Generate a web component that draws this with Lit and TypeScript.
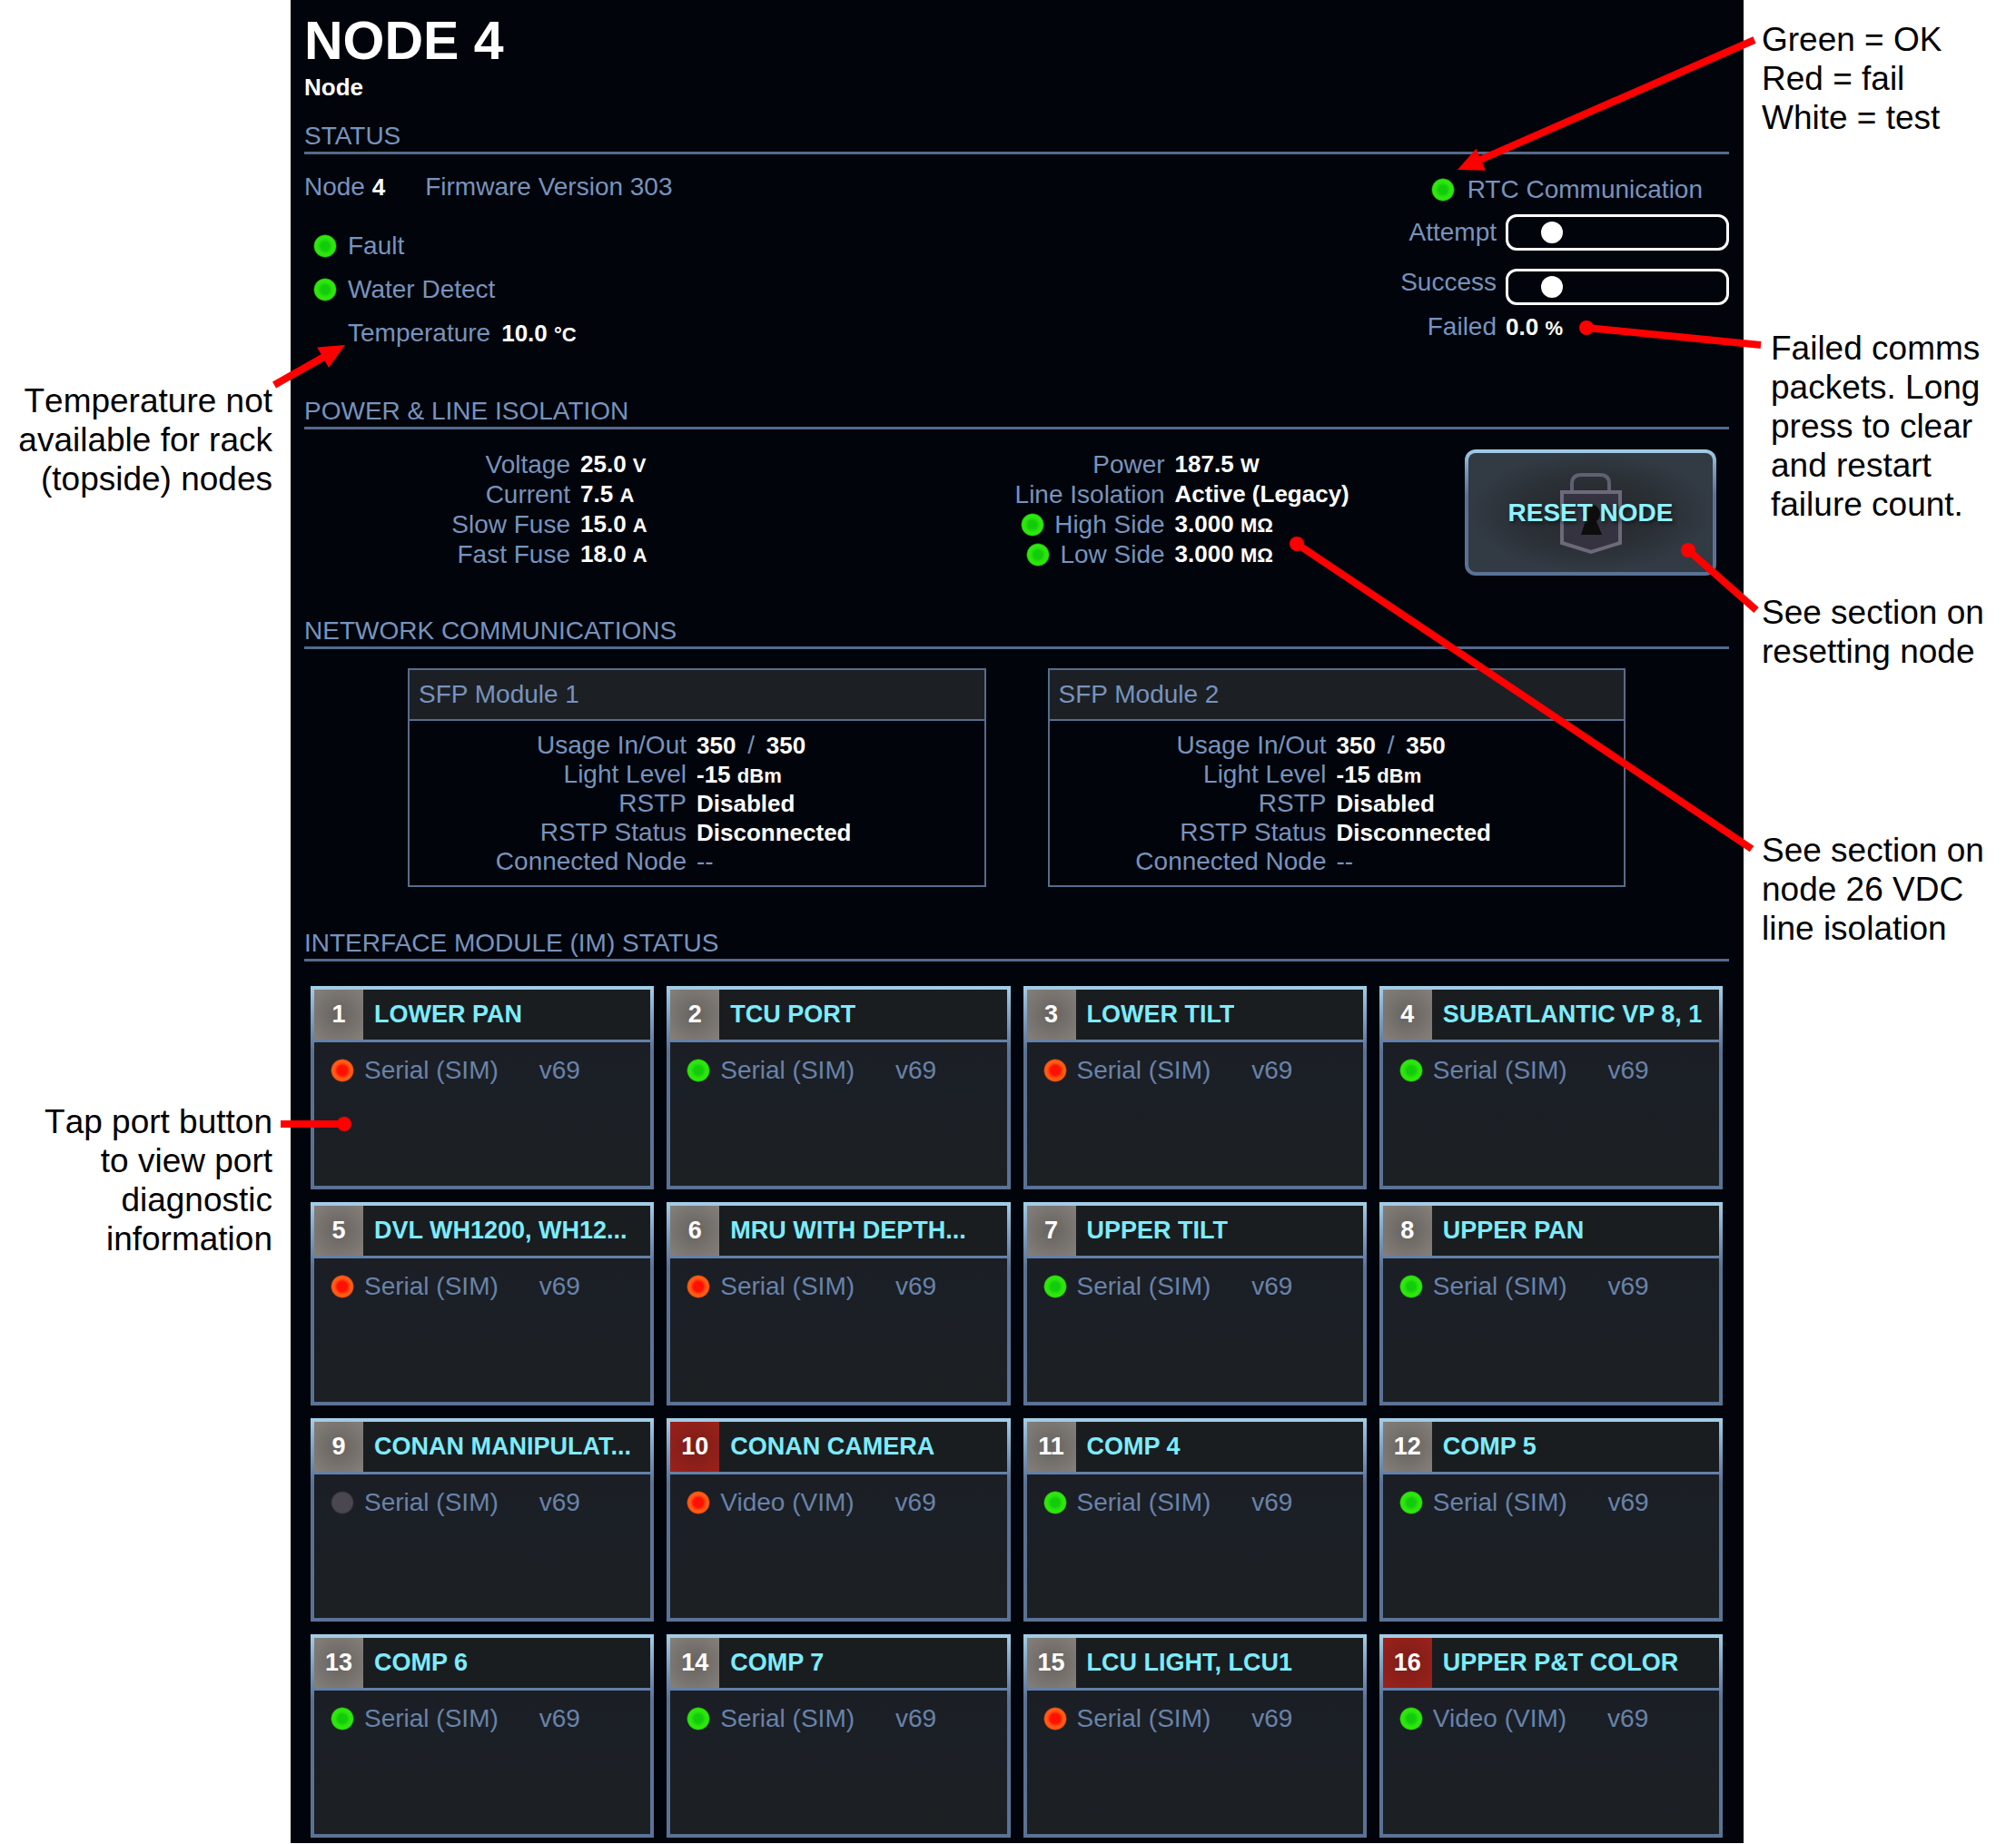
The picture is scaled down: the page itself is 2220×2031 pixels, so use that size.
import { LitElement, html, svg, css } from "lit";
import { customElement, property } from "lit/decorators.js";

type Led = "ok" | "fail" | "off";

interface Reading {
  label: string;
  value: string;
  unit?: string;
  led?: Led;
}

interface Port {
  no: number;
  name: string;
  led: Led;
  kind: string;
  alarm?: boolean;
}

const supply: Reading[] = [
  { label: "Voltage", value: "25.0", unit: "V" },
  { label: "Current", value: "7.5", unit: "A" },
  { label: "Slow Fuse", value: "15.0", unit: "A" },
  { label: "Fast Fuse", value: "18.0", unit: "A" },
];

const isolation: Reading[] = [
  { label: "Power", value: "187.5", unit: "W" },
  { label: "Line Isolation", value: "Active (Legacy)" },
  { label: "High Side", value: "3.000", unit: "MΩ", led: "ok" },
  { label: "Low Side", value: "3.000", unit: "MΩ", led: "ok" },
];

const SERIAL = "Serial (SIM)";
const VIDEO = "Video (VIM)";

const ports: Port[] = [
  { no: 1, name: "LOWER PAN", led: "fail", kind: SERIAL },
  { no: 2, name: "TCU PORT", led: "ok", kind: SERIAL },
  { no: 3, name: "LOWER TILT", led: "fail", kind: SERIAL },
  { no: 4, name: "SUBATLANTIC VP 8, 1", led: "ok", kind: SERIAL },
  { no: 5, name: "DVL WH1200, WH12...", led: "fail", kind: SERIAL },
  { no: 6, name: "MRU WITH DEPTH...", led: "fail", kind: SERIAL },
  { no: 7, name: "UPPER TILT", led: "ok", kind: SERIAL },
  { no: 8, name: "UPPER PAN", led: "ok", kind: SERIAL },
  { no: 9, name: "CONAN MANIPULAT...", led: "off", kind: SERIAL },
  { no: 10, name: "CONAN CAMERA", led: "fail", kind: VIDEO, alarm: true },
  { no: 11, name: "COMP 4", led: "ok", kind: SERIAL },
  { no: 12, name: "COMP 5", led: "ok", kind: SERIAL },
  { no: 13, name: "COMP 6", led: "ok", kind: SERIAL },
  { no: 14, name: "COMP 7", led: "ok", kind: SERIAL },
  { no: 15, name: "LCU LIGHT, LCU1", led: "fail", kind: SERIAL },
  { no: 16, name: "UPPER P&T COLOR", led: "ok", kind: VIDEO, alarm: true },
];

@customElement("status-led")
export class StatusLed extends LitElement {
  @property() state: Led = "ok";

  static styles = css`
    :host {
      display: block;
      flex: none;
      width: 26px;
      height: 26px;
    }
    .lamp {
      width: 100%;
      height: 100%;
      border-radius: 50%;
    }
    .ok {
      background: radial-gradient(closest-side, #12cc0c 0 35%, #2de60c 65% 88%, transparent);
    }
    .fail {
      background: radial-gradient(closest-side, #ff1000 0 40%, #ff5a14 68% 88%, transparent);
    }
    .off {
      background: radial-gradient(closest-side, #4b4751 0 84%, transparent);
    }
  `;

  render() {
    return html`<div class="lamp ${this.state}"></div>`;
  }
}

@customElement("port-card")
export class PortCard extends LitElement {
  @property({ attribute: false }) port!: Port;

  static styles = css`
    :host {
      display: block;
      min-width: 0;
    }
    .card {
      display: flex;
      flex-direction: column;
      width: 100%;
      min-height: 224px;
      box-sizing: border-box;
      margin: 0;
      padding: 0;
      border: 4px solid transparent;
      background:
        linear-gradient(#1b1f23, #1b1f26 50%, #1c2023) padding-box,
        linear-gradient(#a4cfe8, #8fb6d6 8%, #5a7296 32%) border-box;
      font: inherit;
      text-align: left;
      cursor: pointer;
    }
    .head {
      display: flex;
      width: 100%;
      line-height: 55px;
      font-size: 27px;
      font-weight: 700;
      border-bottom: 3px solid #6480a8;
      background: #191d20;
    }
    .no {
      flex: none;
      width: 54px;
      text-align: center;
      color: #fff;
      background: radial-gradient(circle, #66625f, #85807a);
    }
    .no.alarm {
      background: radial-gradient(circle, #7c1d18, #9c211b);
    }
    .name {
      min-width: 0;
      padding-left: 12px;
      overflow: hidden;
      white-space: nowrap;
      color: #7decfc;
    }
    .body {
      display: flex;
      align-items: center;
      padding: 14px 0 0 18px;
      font-size: 28px;
      line-height: 34px;
      color: #6983a9;
    }
    .kind {
      padding: 0 45px 0 11px;
    }
  `;

  render() {
    const p = this.port;
    return html`
      <button class="card" type="button">
        <span class="head">
          <span class="no ${p.alarm ? "alarm" : ""}">${p.no}</span>
          <span class="name">${p.name}</span>
        </span>
        <span class="body">
          <status-led .state=${p.led}></status-led>
          <span class="kind">${p.kind}</span>
          <span>v69</span>
        </span>
      </button>
    `;
  }
}

@customElement("app-root")
export class AppRoot extends LitElement {
  static styles = css`
    :host {
      display: block;
      position: relative;
      font-family: "Liberation Sans", Arial, sans-serif;
      background: #fff;
    }
    .page {
      display: grid;
      grid-template-columns: minmax(0, 16fr) minmax(0, 80fr) minmax(0, 15fr);
    }

    /* Notes beside the panel */
    .notes {
      font-size: 37px;
      line-height: 43px;
      font-kerning: none;
      color: #000;
    }
    .notes p {
      margin: 0;
      white-space: pre;
    }
    .left {
      padding: 420px 20px 0 0;
      text-align: right;
    }
    .left p + p {
      margin-top: 665px;
    }
    .right {
      display: flex;
      flex-direction: column;
      padding: 22px 0 0 20px;
    }
    .right .packets {
      margin: 211px 0 76px 10px;
    }
    .right .isolation {
      margin-top: 176px;
    }
    .leaders {
      position: absolute;
      inset: 0;
      width: 100%;
      height: 100%;
      pointer-events: none;
    }

    /* Panel */
    .panel {
      padding: 15px 16px 6px 15px;
      background: #01040b;
      color: #7893bc;
      font-size: 28px;
      line-height: 34px;
    }
    h1 {
      margin: 0;
      font-size: 59px;
      line-height: 60px;
      color: #fff;
    }
    .subtitle {
      margin: 6px 0 22px;
      font-size: 26px;
      line-height: 30px;
      font-weight: 700;
      color: #fff;
    }
    h2 {
      margin: 0;
      font-size: 28px;
      line-height: 34px;
      font-weight: 400;
      border-bottom: 3px solid #536a8c;
    }
    .content {
      padding: 22px 0 44px;
    }
    .val {
      font-size: 26px;
      font-weight: 700;
      color: #fff;
    }
    .unit {
      font-size: 22px;
      line-height: 1;
    }

    .status {
      display: flex;
      justify-content: space-between;
      padding: 19px 0 45px;
    }
    .ident {
      display: flex;
      gap: 44px;
      margin-bottom: 24px;
    }
    .lamp-row {
      display: flex;
      align-items: center;
      gap: 12px;
      padding-left: 10px;
      line-height: 48px;
    }
    .temp {
      padding-left: 48px;
    }
    .comms {
      display: grid;
      grid-template-columns: auto 246px;
      align-content: start;
      column-gap: 10px;
      padding-top: 3px;
    }
    .rtc {
      grid-column: 1 / -1;
      display: flex;
      justify-content: flex-end;
      align-items: center;
      gap: 14px;
      padding: 0 29px 10px 0;
    }
    .comms label,
    .failed {
      text-align: right;
    }
    .attempt {
      line-height: 40px;
    }
    .success {
      line-height: 30px;
    }
    .track {
      appearance: none;
      box-sizing: border-box;
      width: 100%;
      height: 40px;
      margin: 0 0 20px;
      border: 3px solid #fff;
      border-radius: 12px;
      background: none;
    }
    .track.last {
      margin-bottom: 7px;
    }
    .track::-webkit-slider-thumb {
      appearance: none;
      width: 24px;
      height: 24px;
      border-radius: 50%;
      background: #fff;
    }

    .power {
      display: grid;
      grid-template-columns: minmax(0, 21fr) minmax(0, 20fr) auto;
      align-items: start;
    }
    dl {
      display: grid;
      grid-template-columns: 293px 1fr;
      grid-auto-rows: 33px;
      column-gap: 11px;
      margin: 0;
      line-height: 33px;
    }
    dt {
      display: flex;
      justify-content: flex-end;
      align-items: center;
      gap: 11px;
      white-space: nowrap;
    }
    dd {
      margin: 0;
      white-space: nowrap;
    }
    .reset {
      display: grid;
      place-items: center;
      width: 277px;
      height: 139px;
      margin: 0 14px 0 0;
      padding: 0;
      border: 4px solid transparent;
      border-radius: 12px;
      background:
        radial-gradient(ellipse closest-side, #26282a, #2b3036 60%, #323a44) padding-box,
        linear-gradient(#a4cfe8, #7f9fc4 14%, #5a7296 36%) border-box;
      font: inherit;
      font-weight: 700;
      color: #8cf3ff;
      cursor: pointer;
    }
    .reset > * {
      grid-area: 1 / 1;
    }
    .reset span {
      text-shadow: 2px 2px 4px #101418;
    }

    .network {
      display: grid;
      grid-template-columns: 1fr 1fr;
      gap: 68px;
      padding: 21px 114px 45px;
    }
    .module {
      border: 2px solid #566c8b;
    }
    .module h3 {
      margin: 0;
      padding: 0 10px;
      font-size: 28px;
      line-height: 54px;
      font-weight: 400;
      background: #1c2025;
      border-bottom: 2px solid #566c8b;
    }
    .module dl {
      grid-template-columns: 305px 1fr;
      grid-auto-rows: 32px;
      padding: 11px 0 10px;
      line-height: 32px;
    }
    .slash {
      padding: 0 5px;
    }

    .ports {
      display: grid;
      grid-template-columns: repeat(4, minmax(0, 1fr));
      gap: 14px;
      padding: 27px 7px 0;
    }
  `;

  private reading(r: Reading) {
    return html`
      <dt>${r.led ? html`<status-led .state=${r.led}></status-led>` : ""}<span>${r.label}</span></dt>
      <dd class="val">${r.value} ${r.unit ? html`<span class="unit">${r.unit}</span>` : ""}</dd>
    `;
  }

  private module(n: number) {
    return html`
      <section class="module">
        <h3>SFP Module ${n}</h3>
        <dl>
          <dt>Usage In/Out</dt>
          <dd><span class="val">350</span> <span class="slash">/</span> <span class="val">350</span></dd>
          <dt>Light Level</dt>
          <dd class="val">-15 <span class="unit">dBm</span></dd>
          <dt>RSTP</dt>
          <dd class="val">Disabled</dd>
          <dt>RSTP Status</dt>
          <dd class="val">Disconnected</dd>
          <dt>Connected Node</dt>
          <dd>--</dd>
        </dl>
      </section>
    `;
  }

  private padlock() {
    return html`
      <svg width="72" height="92" viewBox="0 0 72 92" aria-hidden="true">
        <path d="M15 22V14Q15 4 25 4H46Q56 4 56 14V22" fill="none" stroke="#5f6071" stroke-width="4" />
        <path d="M4 23H68V79L36 89L4 79Z" fill="#34333f" stroke="#6b697a" stroke-width="4" />
        <path d="M30 55A10 10 0 1 1 42 55L48 70H25Z" fill="#0d0d0d" />
      </svg>
    `;
  }

  /* Leader from a note to a dot on the panel */
  private dotLeader(x1: number, y1: number, x2: number, y2: number) {
    return svg`
      <line x1=${x1} y1=${y1} x2=${x2} y2=${y2} stroke="#f00" stroke-width="8" />
      <circle cx=${x2} cy=${y2} r="8" fill="#f00" />
    `;
  }

  /* Leader from a note to an arrow tip on the panel */
  private arrowLeader(x1: number, y1: number, x2: number, y2: number) {
    const len = Math.hypot(x2 - x1, y2 - y1);
    const ux = (x2 - x1) / len;
    const uy = (y2 - y1) / len;
    const bx = x2 - ux * 28;
    const by = y2 - uy * 28;
    const head = `${x2},${y2} ${bx - uy * 13},${by + ux * 13} ${bx + uy * 13},${by - ux * 13}`;
    return svg`
      <line x1=${x1} y1=${y1} x2=${bx + ux} y2=${by + uy} stroke="#f00" stroke-width="8" />
      <polygon points=${head} fill="#f00" />
    `;
  }

  render() {
    return html`
      <div class="page">
        <aside class="notes left">
          <p>Temperature not<br />available for rack<br />(topside) nodes</p>
          <p>Tap port button<br />to view port<br />diagnostic<br />information</p>
        </aside>

        <main class="panel">
          <h1>NODE 4</h1>
          <p class="subtitle">Node</p>

          <h2>STATUS</h2>
          <div class="status">
            <div>
              <div class="ident">
                <span>Node <span class="val">4</span></span>
                <span>Firmware Version 303</span>
              </div>
              <div class="lamp-row"><status-led></status-led>Fault</div>
              <div class="lamp-row"><status-led></status-led>Water Detect</div>
              <div class="lamp-row temp">
                <span>Temperature</span>
                <span class="val">10.0 <span class="unit">°C</span></span>
              </div>
            </div>
            <div class="comms">
              <div class="rtc"><status-led></status-led>RTC Communication</div>
              <label class="attempt" for="attempt">Attempt</label>
              <input class="track" id="attempt" type="range" min="0" max="216" value="36" />
              <label class="success" for="success">Success</label>
              <input class="track last" id="success" type="range" min="0" max="216" value="36" />
              <span class="failed">Failed</span>
              <span class="val">0.0 <span class="unit">%</span></span>
            </div>
          </div>

          <h2>POWER &amp; LINE ISOLATION</h2>
          <div class="content power">
            <dl>${supply.map((r) => this.reading(r))}</dl>
            <dl>${isolation.map((r) => this.reading(r))}</dl>
            <button class="reset" type="button">${this.padlock()}<span>RESET NODE</span></button>
          </div>

          <h2>NETWORK COMMUNICATIONS</h2>
          <div class="network">${this.module(1)}${this.module(2)}</div>

          <h2>INTERFACE MODULE (IM) STATUS</h2>
          <div class="ports">${ports.map((p) => html`<port-card .port=${p}></port-card>`)}</div>
        </main>

        <aside class="notes right">
          <p>Green = OK<br />Red = fail<br />White = test</p>
          <p class="packets">Failed comms<br />packets. Long<br />press to clear<br />and restart<br />failure count.</p>
          <p>See section on<br />resetting node</p>
          <p class="isolation">See section on<br />node 26 VDC<br />line isolation</p>
        </aside>
      </div>

      <svg class="leaders" viewBox="0 0 2220 2030" preserveAspectRatio="none" aria-hidden="true">
        ${this.arrowLeader(1932, 44, 1605, 187)}
        ${this.arrowLeader(302, 424, 380, 380)}
        ${this.dotLeader(1939, 380, 1747, 361)}
        ${this.dotLeader(1929, 935, 1428, 599)}
        ${this.dotLeader(1934, 672, 1859, 606)}
        ${this.dotLeader(309, 1238, 379, 1238)}
      </svg>
    `;
  }
}
